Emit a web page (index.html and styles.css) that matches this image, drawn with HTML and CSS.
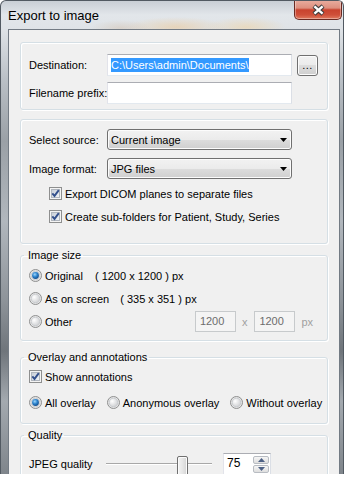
FILE: index.html
```html
<!DOCTYPE html>
<html>
<head>
<meta charset="utf-8">
<link rel="stylesheet" href="styles.css">
</head>
<body>
<svg class="defs" width="0" height="0" aria-hidden="true">
  <defs>
    <linearGradient id="cbIn" x1="0" y1="0" x2="1" y2="1">
      <stop offset="0" stop-color="#c5ccd6"/>
      <stop offset="1" stop-color="#f4f6f8"/>
    </linearGradient>
    <radialGradient id="rOff" cx="0.35" cy="0.35" r="0.85">
      <stop offset="0" stop-color="#ffffff"/>
      <stop offset="1" stop-color="#c4c6c9"/>
    </radialGradient>
    <radialGradient id="rDot" cx="0.4" cy="0.35" r="0.75">
      <stop offset="0" stop-color="#9fd6fb"/>
      <stop offset="0.45" stop-color="#2f86cf"/>
      <stop offset="1" stop-color="#0b3e7c"/>
    </radialGradient>
    <symbol id="cb" viewBox="0 0 13 13">
      <rect x="0.5" y="0.5" width="12" height="12" fill="#f4f4f4" stroke="#8e8f8f"/>
      <rect x="2.5" y="2.5" width="8" height="8" fill="url(#cbIn)" stroke="#b0b6be"/>
      <path d="M3.3 6.3 L5.5 8.9 L9.8 3.1" fill="none" stroke="#33508c" stroke-width="1.9"/>
    </symbol>
    <symbol id="ro" viewBox="0 0 13 13">
      <circle cx="6.5" cy="6.5" r="6" fill="#e6e6e6" stroke="#8e8f8f"/>
      <circle cx="6.5" cy="6.5" r="4.3" fill="url(#rOff)" stroke="#c3c6ca" stroke-width="0.8"/>
    </symbol>
    <symbol id="ron" viewBox="0 0 13 13">
      <circle cx="6.5" cy="6.5" r="6" fill="#e6e6e6" stroke="#8e8f8f"/>
      <circle cx="6.5" cy="6.5" r="4.3" fill="#dfe3e8" stroke="#c3c6ca" stroke-width="0.8"/>
      <circle cx="6.5" cy="6.5" r="3.4" fill="url(#rDot)"/>
    </symbol>
  </defs>
</svg>

<div class="window">
  <div class="titlebar">
    <span class="title">Export to image</span>
    <div class="close">
      <svg width="15" height="12" viewBox="0 0 15 12">
        <path d="M3 2 L12 10 M12 2 L3 10" stroke="#3c3c3c" stroke-width="4.4"/>
        <path d="M3.4 2.4 L11.6 9.6 M11.6 2.4 L3.4 9.6" stroke="#ffffff" stroke-width="2.4"/>
      </svg>
    </div>
  </div>

  <div class="client">
    <fieldset class="group g-dest">
      <div class="row">
        <span class="lbl">Destination:</span>
        <div class="textbox"><span class="sel">C:\Users\admin\Documents\</span></div>
        <div class="browse">...</div>
      </div>
      <div class="row">
        <span class="lbl">Filename prefix:</span>
        <div class="textbox"></div>
      </div>
    </fieldset>

    <fieldset class="group g-src">
      <div class="row">
        <span class="lbl">Select source:</span>
        <div class="combo"><span>Current image</span><svg width="7" height="4" viewBox="0 0 7 4"><polygon points="0,0 7,0 3.5,4" fill="#000"/></svg></div>
      </div>
      <div class="row">
        <span class="lbl">Image format:</span>
        <div class="combo"><span>JPG files</span><svg width="7" height="4" viewBox="0 0 7 4"><polygon points="0,0 7,0 3.5,4" fill="#000"/></svg></div>
      </div>
      <div class="checks">
        <div class="check"><svg class="box"><use href="#cb"/></svg><span>Export DICOM planes to separate files</span></div>
        <div class="check"><svg class="box"><use href="#cb"/></svg><span>Create sub-folders for Patient, Study, Series</span></div>
      </div>
    </fieldset>

    <fieldset class="group g-size">
      <legend>Image size</legend>
      <div class="radio-row">
        <svg class="box"><use href="#ron"/></svg><span class="rtext">Original</span><span class="dim dim1">( 1200 x 1200 ) px</span>
      </div>
      <div class="radio-row">
        <svg class="box"><use href="#ro"/></svg><span class="rtext">As on screen</span><span class="dim dim2">( 335 x 351 ) px</span>
      </div>
      <div class="radio-row">
        <svg class="box"><use href="#ro"/></svg><span class="rtext">Other</span>
        <div class="custom">
          <div class="dis-input">1200</div>
          <span class="dis-text">x</span>
          <div class="dis-input">1200</div>
          <span class="dis-text">px</span>
        </div>
      </div>
    </fieldset>

    <fieldset class="group g-over">
      <legend>Overlay and annotations</legend>
      <div class="check"><svg class="box"><use href="#cb"/></svg><span>Show annotations</span></div>
      <div class="radios">
        <div class="radio"><svg class="box"><use href="#ron"/></svg><span>All overlay</span></div>
        <div class="radio"><svg class="box"><use href="#ro"/></svg><span>Anonymous overlay</span></div>
        <div class="radio"><svg class="box"><use href="#ro"/></svg><span>Without overlay</span></div>
      </div>
    </fieldset>

    <fieldset class="group g-qual">
      <legend>Quality</legend>
      <div class="row">
        <span class="lbl lbl-q">JPEG quality</span>
        <div class="slider" style="--v:0.75">
          <div class="track"></div>
          <div class="thumb"></div>
        </div>
        <div class="spin">
          <span class="spin-val">75</span>
          <div class="spin-btns">
            <div class="sbtn"><svg width="7" height="4" viewBox="0 0 7 4"><polygon points="0,4 7,4 3.5,0" fill="#4d6185"/></svg></div>
            <div class="sbtn"><svg width="7" height="4" viewBox="0 0 7 4"><polygon points="0,0 7,0 3.5,4" fill="#4d6185"/></svg></div>
          </div>
        </div>
      </div>
    </fieldset>
  </div>
</div>
</body>
</html>
```

FILE: styles.css
```css
* { box-sizing: border-box; }
html, body { margin: 0; padding: 0; background: #ffffff; }
body {
  font-family: "Liberation Sans", Arial, sans-serif;
  font-size: 11px;
  color: #000;
}
.defs { display: block; width: 0; height: 0; overflow: hidden; }

.window {
  width: 344px;
  height: 474px;
  overflow: hidden;
  display: flex;
  flex-direction: column;
  border: 1px solid #525a62;
  border-bottom: none;
  border-radius: 6px 6px 0 0;
  padding: 0 3px 0 7px;
  background:
    radial-gradient(ellipse 50px 10px at 175px 26px, rgba(236, 200, 150, 0.55), rgba(236, 200, 150, 0) 100%),
    radial-gradient(ellipse 40px 10px at 245px 26px, rgba(240, 210, 160, 0.55), rgba(240, 210, 160, 0) 100%),
    radial-gradient(ellipse 30px 8px at 120px 27px, rgba(210, 190, 170, 0.45), rgba(210, 190, 170, 0) 100%),
    linear-gradient(180deg, #c9cfd5 0, #e2e6ea 14px, #dfe3e7 28px, #b9bfc5 80px, #9aa0a6 140px, #b1b7bd 220px, #8d9399 300px, #6f757b 350px, #a3a9af 400px, #7e848a 474px);
}

.titlebar {
  height: 28px;
  flex-shrink: 0;
  display: flex;
  justify-content: space-between;
  align-items: flex-start;
}
.title {
  font-size: 13px;
  line-height: 14px;
  padding-top: 8px;
  color: #000;
}
.close {
  width: 48px;
  height: 20px;
  margin: -1px -2px 0 0;
  border: 1px solid #6a2a22;
  border-top: none;
  border-radius: 0 0 5px 5px;
  background: linear-gradient(180deg, #e9aea0 0%, #dd8f7e 42%, #c9432e 52%, #cf4f39 78%, #e07a5f 100%);
  box-shadow: inset 0 0 0 1px rgba(255, 255, 255, 0.35);
  display: flex;
  align-items: center;
  justify-content: center;
}

.client {
  flex: 1;
  display: flex;
  flex-direction: column;
  border: 1px solid #737b84;
  border-bottom: none;
  background: #f0f0f0;
  padding: 0 11px;
}

.group {
  margin: 0;
  min-width: 0;
  border: 1px solid #d5dfe5;
  border-radius: 3px;
  padding: 0 8px;
  box-shadow: inset 1px 1px 0 #ffffff, 1px 1px 0 #ffffff;
}
.group legend {
  padding: 0 2px 0 4px;
  margin-left: -5px;
  line-height: 14px;
}

.row { display: flex; align-items: center; }
.lbl { width: 78px; flex-shrink: 0; white-space: nowrap; }

.g-dest { margin-top: 12px; padding-top: 11px; padding-bottom: 5px; display: flex; flex-direction: column; gap: 6px; }
.textbox {
  width: 185px;
  height: 22px;
  background: #fff;
  border: 1px solid;
  border-color: #abadb3 #dbdfe6 #e3e9ef #e2e3ea;
  padding: 0 3px;
  display: flex;
  align-items: center;
}
.sel { background: #3399ff; color: #fff; line-height: 14px; white-space: nowrap; }
.browse {
  width: 21px;
  height: 21px;
  margin-left: 5px;
  border: 1px solid #707070;
  border-radius: 3px;
  background: linear-gradient(180deg, #f2f2f2 0%, #ebebeb 50%, #dddddd 50%, #cfcfcf 100%);
  box-shadow: inset 0 0 0 1px #fcfcfc;
  text-align: center;
  line-height: 19px;
  font-size: 11px;
  letter-spacing: 0.5px;
}

.g-src { margin-top: 9px; padding-top: 9px; padding-bottom: 18px; display: flex; flex-direction: column; gap: 8px; }
.combo {
  width: 185px;
  height: 21px;
  border: 1px solid #707070;
  border-radius: 3px;
  background: linear-gradient(180deg, #f2f2f2 0%, #ebebeb 50%, #dddddd 50%, #cfcfcf 100%);
  box-shadow: inset 0 0 0 1px #fcfcfc;
  display: flex;
  align-items: center;
  justify-content: space-between;
  padding: 0 4px 0 3px;
}
.checks { display: flex; flex-direction: column; gap: 6px; padding-left: 20px; margin-top: -2px; }

.check, .radio, .radio-row { display: flex; align-items: center; white-space: nowrap; }
.check { height: 17px; }
.box { width: 13px; height: 13px; flex-shrink: 0; margin-right: 3px; }

.g-size { margin-top: 4px; padding-top: 3px; padding-bottom: 8px; display: flex; flex-direction: column; gap: 2px; }
.radio-row { height: 21px; }
.dim1 { margin-left: 12px; }
.dim2 { margin-left: 11px; }
.custom { margin-left: auto; margin-right: 6px; display: flex; align-items: center; }
.dis-input {
  width: 41px;
  height: 21px;
  border: 1px solid #c7cacc;
  background: #f4f4f4;
  color: #6d6d6d;
  padding-left: 4px;
  line-height: 19px;
}
.dis-text { color: #a0a0a0; margin: 0 7px 0 6px; }
.custom .dis-text:last-child { margin-right: 0; }

.g-over { margin-top: 9px; padding-top: 4px; padding-bottom: 12px; display: flex; flex-direction: column; gap: 9px; }
.radios { display: flex; gap: 11px; height: 17px; align-items: center; }

.g-qual { margin-top: 4px; padding-top: 11px; padding-bottom: 10px; }
.lbl-q { width: 77px; }
.slider { position: relative; width: 106px; height: 22px; }
.track {
  position: absolute;
  left: 0; right: 0; top: 10px;
  height: 2px;
  border-top: 1px solid #a8a8a8;
  border-bottom: 1px solid #ffffff;
}
.thumb {
  position: absolute;
  top: 3px;
  left: calc(var(--v) * (100% - 10px) - 1px);
  width: 11px;
  height: 21px;
  border: 1px solid #707070;
  border-radius: 2px 2px 1px 1px;
  background: linear-gradient(90deg, #f4f4f4 0%, #e6e6e6 50%, #d4d4d4 100%);
  box-shadow: inset 0 0 0 1px #fbfbfb;
}
.spin {
  margin-left: 11px;
  width: 48px;
  height: 22px;
  background: #fff;
  border: 1px solid;
  border-color: #abadb3 #dbdfe6 #e3e9ef #e2e3ea;
  display: flex;
  align-items: flex-start;
  padding: 1px 1px 0 3px;
}
.spin-val { flex: 1; font-size: 12px; line-height: 16px; }
.spin-btns { display: flex; flex-direction: column; gap: 1px; margin-top: 1px; }
.sbtn {
  width: 16px;
  height: 8px;
  border: 1px solid #b8bcc2;
  border-radius: 2px;
  background: linear-gradient(180deg, #f6f6f6, #dedede);
  display: flex;
  align-items: center;
  justify-content: center;
}
```
